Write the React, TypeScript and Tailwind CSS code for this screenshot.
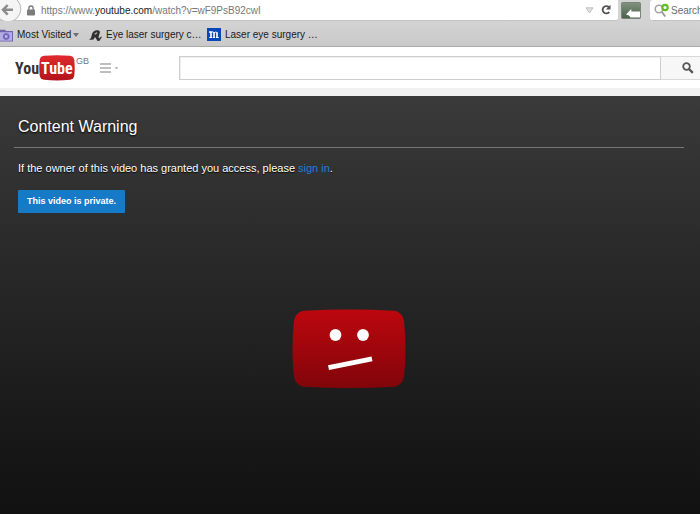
import React, { useState } from "react";

const bookmarks = [
    { label: "Eye laser surgery c…", icon: <HorseIcon /> },
    { label: "Laser eye surgery …", icon: <MIcon /> },
];

function FolderIcon() {
    return (
        <svg width="13" height="13" viewBox="0 0 13 13" className="shrink-0">
            <path d="M0 .8h5l1.200 1.200H13v10.500H0z" fill="#6f66ae" />
            <path d="M0 3.200h12v8.500H0z" fill="#b3ade2" />
            <circle cx="6.200" cy="7.500" r="2.500" fill="none" stroke="#7066b8" strokeWidth="1.500" />
            <path d="M6.200 4.200v6.600M2.900 7.500h6.600" stroke="#7066b8" strokeWidth="0.8" />
            <circle cx="6.200" cy="7.500" r="1.100" fill="#c9c4ee" />
        </svg>
    );
}

function HorseIcon() {
    return (
        <svg width="13" height="13" viewBox="0 0 13 13" className="shrink-0">
            <path d="M0 11C2 10 2.400 8 3 5 3.700 2 6.500.8 9 1.200c1.800.3 2.200 1.500 1.700 3L9.500 8l.7 1.600 1.800-2.100.9.500-2.300 3.700-2.100.2L7 9.500 6 8l-1.500 2.400L2 10.800z" fill="#303030" />
            <path d="M5.300 4.400l2.600-1.400.6 1.300-2.300 1.800z" fill="#999" />
        </svg>
    );
}

function MIcon() {
    return (
        <svg width="14" height="14" viewBox="0 0 14 14" className="shrink-0">
            <rect width="14" height="13" fill="#0648b4" />
            <path d="M2 4h1.8M4 3.3v6M7 4.3v5M10 4.3v5" stroke="#fff" strokeWidth="1.6" fill="none" />
            <path d="M4 4.3q2.8-1.3 3 .6 2.8-2 3 .6M2.3 9.5h3M6 9.5h2.2M9 9.5h2.8" stroke="#fff" strokeWidth="1" fill="none" />
        </svg>
    );
}

function BrowserToolbar() {
    return (
        <div className="flex h-[22px] items-start overflow-hidden bg-[#d3d3d3]">
            {/* Address bar */}
            <div className="flex h-[21px] min-w-0 flex-1 items-center rounded-br-[3px] border-b border-[#c2c2c2] bg-white">
                <button type="button" aria-label="Back" className="shrink-0">
                    <svg width="22" height="22" viewBox="0 0 22 22" className="block">
                        <circle cx="8" cy="10" r="12.8" fill="#f5f5f5" stroke="#b8b8b8" strokeWidth="1" />
                        <path d="M13 10.8H4M7.7 6L3 10.8l4.7 4.8" fill="none" stroke="#8b8b8b" strokeWidth="2.5" />
                    </svg>
                </button>
                <svg width="8" height="11" viewBox="0 0 8 11" className="ml-[5px] shrink-0">
                    <path d="M1.9 5V3.3a2.1 2.3 0 0 1 4.2 0V5" fill="none" stroke="#7c7c7c" strokeWidth="1.4" />
                    <rect y="4.5" width="8" height="6" rx="0.8" fill="#7c7c7c" />
                </svg>
                <p className="ml-1.5 flex-1 truncate pt-px text-[10px] leading-5 text-[#787878]">
                    https://www.<span className="text-[#1c1c1c]">youtube.com</span>/watch?v=wF9PsB92cwI
                </p>
                <svg width="9" height="7" viewBox="0 0 9 7" className="mr-1.5 shrink-0">
                    <path d="M1 .8h7L4.5 6z" fill="#e2e2e2" stroke="#b5b5b5" strokeWidth="0.8" />
                </svg>
                <button type="button" aria-label="Reload" className="mr-1.5 shrink-0">
                    <svg width="12" height="12" viewBox="0 0 12 12" className="block">
                        <path d="M8.8 3A3.7 3.7 0 1 0 9.3 8" fill="none" stroke="#505050" strokeWidth="1.8" />
                        <path d="M10.5.8v4.7H5.8z" fill="#505050" />
                    </svg>
                </button>
            </div>

            {/* Extension button */}
            <button type="button" aria-label="Extension" className="mx-[3px] mt-0.5 shrink-0">
                <svg width="20" height="17" viewBox="0 0 20 17" className="block">
                    <defs>
                        <linearGradient id="ext" x2="0" y2="1">
                            <stop stopColor="#82937e" />
                            <stop offset="1" stopColor="#48604a" />
                        </linearGradient>
                    </defs>
                    <rect x="0.5" y="0.5" width="19" height="16" rx="1" fill="url(#ext)" stroke="#788476" />
                    <path d="M5 12.500l5.300-5.500v2.500H19v6h-9.500l-1.500-2z" fill="#fff" />
                </svg>
            </button>

            {/* Search box */}
            <label className="ml-1.5 flex h-[21px] w-[50px] shrink-0 items-center overflow-hidden rounded-l-[3px] border-b border-[#c2c2c2] bg-white">
                <svg width="16" height="15" viewBox="0 0 16 15" className="ml-1 shrink-0">
                    <circle cx="5" cy="6" r="3.8" fill="none" stroke="#a2a2a2" strokeWidth="1.5" />
                    <path d="M7.8 9l3.5 4.5" stroke="#999" strokeWidth="2" />
                    <circle cx="11" cy="4.500" r="3.800" fill="#5fbf24" />
                    <circle cx="11" cy="4.500" r="1.500" fill="#fff" />
                </svg>
                <input type="text" aria-label="Search the web" placeholder="Search" className="w-[50px] shrink-0 pl-px pt-px text-[10px] leading-5 placeholder:text-[#6c6c6c] focus:outline-none" />
            </label>
        </div>
    );
}

function BookmarksBar() {
    return (
        <nav className="flex h-[25px] items-center border-b border-[#aaaaaa] bg-gradient-to-b from-[#d3d3d3] to-[#c9c9c9] pt-0.5 text-[10px] leading-4 text-[#1a1a1a]">
            <button type="button" className="flex w-[79px] items-center whitespace-nowrap">
                <FolderIcon />
                <span className="ml-1">Most Visited</span>
                <svg width="6" height="4" viewBox="0 0 6 4" className="ml-auto">
                    <path d="M0 0h6L3 4z" fill="#6d6d6d" />
                </svg>
            </button>
            {bookmarks.map((b) => (
                <a key={b.label} href="#" className="ml-2.5 flex w-[108px] items-center whitespace-nowrap">
                    {b.icon}
                    <span className="ml-1">{b.label}</span>
                </a>
            ))}
        </nav>
    );
}

function Logo() {
    return (
        <a href="#" aria-label="YouTube home" className="flex shrink-0 items-start">
            <svg width="60" height="26" viewBox="0 0 60 26" fontFamily="'Roboto Condensed', Roboto, sans-serif" fontWeight="bold">
                <defs>
                    <linearGradient id="tube" x2="0" y2="1">
                        <stop stopColor="#df2a2d" />
                        <stop offset="1" stopColor="#b3141b" />
                    </linearGradient>
                </defs>
                <path d="M29 .8Q42-.2 55 .8q3.800.3 4.300 4.500.8 7.500 0 15-.5 4-4.300 4.500-13 1.200-26 0-3.800-.5-4.300-4.500-.8-7.500 0-15Q25.200 1.100 29 .8z" fill="url(#tube)" />
                <text x="0" y="19" fontSize="16" fill="#333">You</text>
                <text x="26" y="19" fontSize="16" fill="#fff">Tube</text>
            </svg>
            <span className="ml-px text-[9px] leading-3 text-[#777777]">GB</span>
        </a>
    );
}

function Masthead() {
    const [query, setQuery] = useState("");

    return (
        <header className="flex h-[41px] items-center bg-white pl-[15px]">
            <Logo />
            <button type="button" aria-label="Guide" className="ml-[11px] flex shrink-0 items-center">
                <svg width="18" height="10" viewBox="0 0 18 10">
                    <path d="M0 1h11M0 5h11M0 9h11" stroke="#aaa" strokeWidth="1.5" />
                    <path d="M14.500 4.300h4l-2 2z" fill="#aaa" />
                </svg>
            </button>
            <form className="ml-[61px] flex h-6 min-w-0 flex-1" onSubmit={(e) => e.preventDefault()}>
                <input type="text" aria-label="Search" value={query} onChange={(e) => setQuery(e.target.value)} className="min-w-0 flex-1 border border-[#cecece] px-2 text-sm shadow-[inset_1px_1px_1px_#eeeeee] focus:outline-none" />
                <button type="submit" aria-label="Search YouTube" className="flex w-[39px] items-center border-y border-[#d8d8d8] bg-[#f7f7f7] pl-[21px]">
                    <svg width="12" height="12" viewBox="0 0 12 12">
                        <circle cx="4.500" cy="4.500" r="3.300" fill="none" stroke="#555" strokeWidth="1.800" />
                        <path d="M7 7l3.800 3.800" stroke="#555" strokeWidth="2.400" />
                    </svg>
                </button>
            </form>
        </header>
    );
}

function SadFace() {
    return (
        <svg width="114" height="80" viewBox="0 0 114 80" className="mx-auto mt-24 block" role="img" aria-label="Video unavailable">
            <defs>
                <linearGradient id="face" x2="0" y2="1">
                    <stop stopColor="#bd070e" />
                    <stop offset="1" stopColor="#80050a" />
                </linearGradient>
            </defs>
            <path d="M13 1.700Q57-.7 101 1.700c7 .4 10.500 5 11.200 12q2.600 26 0 52c-.7 7-4.200 11.500-11.200 12q-44 2.800-88 0c-7-.5-10.500-5-11.200-12q-2.600-26 0-52c.7-7 4.200-11.600 11.200-12z" fill="url(#face)" />
            <circle cx="43.500" cy="26" r="5.900" fill="#fff" />
            <circle cx="71" cy="26" r="5.900" fill="#fff" />
            <path d="M36 56.200l43.500-8.700 1 4.800L37 61z" fill="#fff" />
        </svg>
    );
}

export default function App() {
    return (
        <div className="flex min-h-screen flex-col font-['Liberation_Sans',Arial,sans-serif]">
            <BrowserToolbar />
            <BookmarksBar />
            <Masthead />

            {/* Player */}
            <main className="flex flex-1 flex-col border-t-8 border-[#f1f1f1] bg-[#111111] text-white">
                <div className="flex-1 bg-gradient-to-b from-[#3a3a3a] to-[#111111] pl-3.5 pr-4">
                    <h1 className="border-b border-[#777777] px-1 pb-2.5 pt-[21px] text-[16px] leading-5 [text-shadow:0_1px_2px_#000]">Content Warning</h1>
                    <div className="px-1 pt-[11px]">
                        <p className="text-[11px] leading-[18px] [text-shadow:0_1px_1px_#000]">
                            If the owner of this video has granted you access, please{" "}
                            <a href="#" className="text-[#1c80d0] [text-shadow:none]">
                                sign in
                            </a>
                            .
                        </p>
                        <button type="button" className="mt-[13px] block h-[23px] rounded-[1px] bg-[#167ac6] px-[9px] text-[9px] font-bold leading-[23px]">
                            This video is private.
                        </button>
                    </div>
                    <SadFace />
                </div>
            </main>
        </div>
    );
}
